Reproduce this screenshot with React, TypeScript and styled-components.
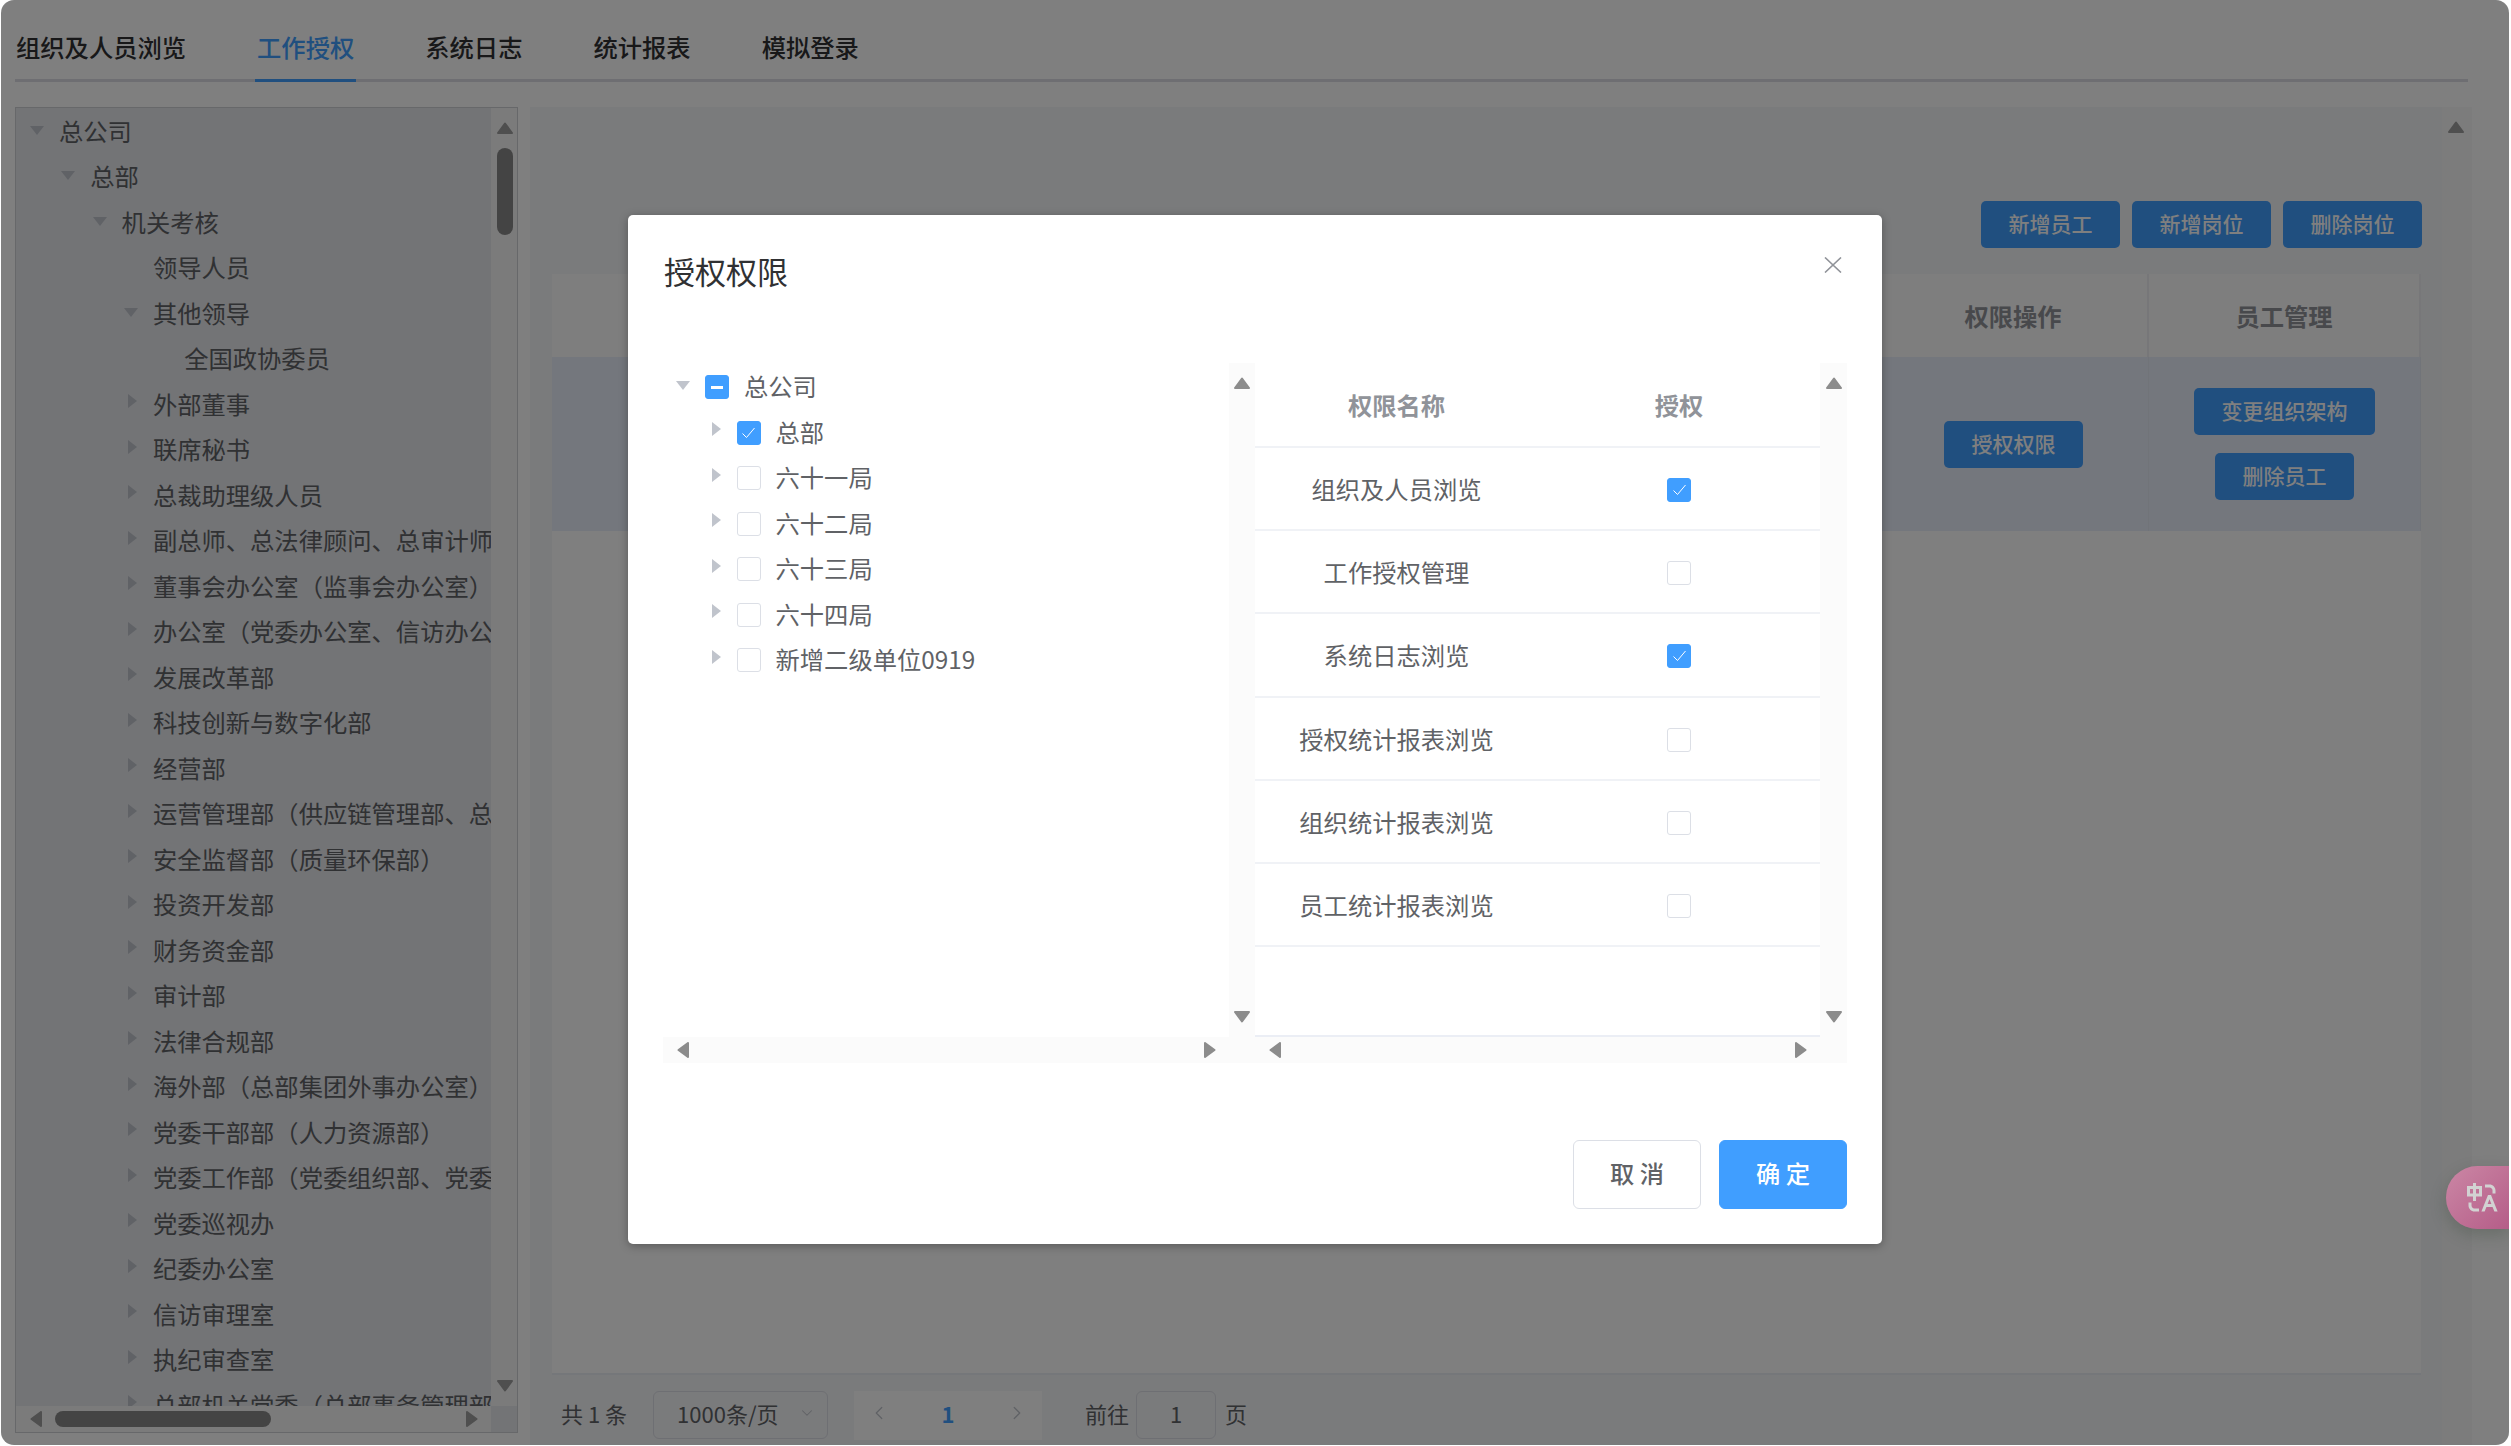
import React from "react";
import styled, { createGlobalStyle } from "styled-components";
import { ChevronDown, ChevronLeft, ChevronRight } from "lucide-react";
import { RiTranslate } from "react-icons/ri";

const Global = createGlobalStyle`
  html, body { margin: 0; padding: 0; background: #fff; overflow: hidden; }
  * { box-sizing: border-box; }
  body { font-family: "Noto Sans CJK SC", "Noto Sans", sans-serif; }
`;

const Shell = styled.div`
  position: relative;
  width: 2508px;
  height: 1445px;
  margin-left: 1px;
  background: #fff;
  border-radius: 13px;
  overflow: hidden;
`;

const TabBar = styled.div`
  display: flex;
  gap: 67px;
  height: 82px;
  margin: 0 41px 0 14px;
  padding-top: 18px;
  border-bottom: 3px solid #dcdde4;
`;

const Tab = styled.div<{ $active?: boolean }>`
  height: 64px;
  padding: 0 2px;
  line-height: 58px;
  font-size: 24.3px;
  font-weight: 500;
  white-space: nowrap;
  color: ${(p) => (p.$active ? "#409eff" : "#303133")};
  border-bottom: 3px solid ${(p) => (p.$active ? "#409eff" : "transparent")};
  &:first-child { margin-left: -1px; }
`;

const Main = styled.div`
  display: flex;
  align-items: flex-start;
  gap: 12px;
  margin: 25px 0 0 14px;
`;

const LeftPanel = styled.div`
  display: grid;
  grid-template-columns: 1fr 26px;
  grid-template-rows: 1fr 26px;
  width: 503px;
  height: 1326px;
  background: #e6e8ec;
  border: 1px solid #cfd0d4;
`;

const TreeViewport = styled.div`
  overflow: hidden;
  min-width: 0;
  padding-top: 0;
`;

const PageTreeRow = styled.div<{ $level: number }>`
  display: flex;
  align-items: center;
  height: 45.5px;
  padding-left: ${(p) => 13 + p.$level * 31.3}px;
  padding-bottom: 1px;
  font-size: 24.3px;
  color: #606266;
  white-space: nowrap;
`;

const CaretSlot = styled.span`
  display: flex;
  flex: none;
  align-items: center;
  justify-content: center;
  width: 16px;
  height: 16px;
  margin-right: 14px;
`;

const CaretSvg = styled.svg`
  display: block;
  fill: #c0c4cc;
`;

const ClosedCaret = styled(CaretSvg)`
  margin: 0 0 4px 4px;
`;

const ScrollV = styled.div<{ $track: string }>`
  display: flex;
  flex-direction: column;
  align-items: center;
  padding: 14px 0;
  background: ${(p) => p.$track};
`;

const TreeStrip = styled(ScrollV)`
  padding-left: 2px;
`;

const PanelStrip = styled(ScrollV)`
  flex: none;
  width: 30px;
  padding-right: 3px;
`;

const ScrollH = styled.div<{ $track: string }>`
  display: flex;
  align-items: center;
  padding: 0 13px 0 14px;
  background: ${(p) => p.$track};
`;

const ThumbV = styled.div`
  width: 16px;
  height: 87px;
  margin-top: 14px;
  border-radius: 8px;
  background: #888;
`;

const ThumbH = styled.div`
  width: 216px;
  height: 16px;
  margin-left: 13px;
  border-radius: 8px;
  background: #888;
`;

const Push = styled.div`
  flex: 1;
`;

const ArrowSvg = styled.svg<{ $tone: string }>`
  display: block;
  flex: none;
  fill: ${(p) => p.$tone};
  stroke: ${(p) => p.$tone};
  stroke-width: 2;
  stroke-linejoin: round;
`;

const RightPanel = styled.div`
  display: flex;
  width: 1942px;
  height: 1338px;
  background: #f5f6f8;
`;

const Content = styled.div`
  display: flex;
  flex: 1;
  flex-direction: column;
  min-width: 0;
  padding: 94px 20px 0 22px;
`;

const Toolbar = styled.div`
  display: flex;
  align-items: center;
  gap: 12px;
  height: 47px;
  margin-bottom: 26px;
`;

const PageTitle = styled.div`
  margin: 0 auto 0 645px;
  padding-top: 6px;
  font-size: 30px;
  font-weight: 700;
  color: #000;
  white-space: nowrap;
`;

const PrimaryButton = styled.button<{ $w?: number }>`
  flex: none;
  width: ${(p) => p.$w ?? 139}px;
  height: 47px;
  padding: 0 0 3px;
  border: 0;
  border-radius: 5px;
  background: #409eff;
  color: #fff;
  font: 500 21px "Noto Sans CJK SC", sans-serif;
`;

const DataTable = styled.div`
  display: grid;
  grid-template-columns: 1327px 270px 272px;
  grid-template-rows: 83px 174px 1fr;
  width: 1869px;
  height: 1101px;
  background: #fff;
  border-bottom: 2px solid #ebeef5;
`;

const HeadCell = styled.div`
  display: flex;
  align-items: center;
  justify-content: center;
  background: #fdfdfd;
  border-right: 2px solid #eeeff3;
  font-size: 24.3px;
  font-weight: 700;
  color: #909399;
`;

const BodyCell = styled.div`
  display: flex;
  flex-direction: column;
  align-items: center;
  justify-content: center;
  gap: 18px;
  background: #e9eefb;
  border-right: 1px solid #e3e8f3;
`;

const Pagination = styled.div`
  display: flex;
  align-items: center;
  height: 48px;
  margin-top: 16px;
  padding-left: 9px;
  font-size: 22px;
  color: #606266;
  white-space: nowrap;
`;

const PageSelect = styled.div`
  display: flex;
  align-items: center;
  justify-content: space-between;
  width: 175px;
  height: 48px;
  margin-left: 26px;
  padding: 0 11px 4px 23px;
  border: 1px solid #dcdfe6;
  border-radius: 6px;
  svg { color: #c0c4cc; }
`;

const Pager = styled.div`
  display: flex;
  align-items: center;
  justify-content: space-between;
  width: 188px;
  height: 49px;
  margin-left: 26px;
  padding: 0 14px 4px;
  background: #fff;
  svg { color: #c0c4cc; }
`;

const PagerNumber = styled.span`
  font-weight: 700;
  color: #409eff;
`;

const JumpLabel = styled.span<{ $gap: number }>`
  margin-left: ${(p) => p.$gap}px;
  padding-bottom: 4px;
`;

const JumpInput = styled.div`
  display: flex;
  align-items: center;
  justify-content: center;
  width: 80px;
  height: 48px;
  margin-left: 7px;
  padding-bottom: 4px;
  border: 1px solid #dcdfe6;
  border-radius: 6px;
`;

const Overlay = styled.div`
  position: absolute;
  inset: 0;
  background: rgba(0, 0, 0, 0.5);
`;

const Dialog = styled.div`
  position: absolute;
  left: 627px;
  top: 215px;
  display: flex;
  flex-direction: column;
  width: 1254px;
  height: 1029px;
  border-radius: 5px;
  background: #fff;
  box-shadow: 0 2px 10px rgba(0, 0, 0, 0.3);
`;

const DialogHeader = styled.div`
  position: relative;
  height: 148px;
  padding: 35px 36px 0;
  font-size: 31px;
  line-height: 42px;
  color: #303133;
`;

const CloseIcon = styled.svg`
  position: absolute;
  top: 42px;
  right: 40px;
  fill: none;
  stroke: #909399;
  stroke-width: 1.6;
`;

const Transfer = styled.div`
  display: grid;
  grid-template-columns: 566px 26px 565px 27px;
  grid-template-rows: 674px 26px;
  width: 1184px;
  margin-left: 35px;
`;

const AuthTree = styled.div`
  padding-top: 0;
`;

const AuthRow = styled.div<{ $level: number }>`
  display: flex;
  align-items: center;
  height: 45.5px;
  padding-left: ${(p) => 12 + p.$level * 31.5}px;
  font-size: 24.3px;
  color: #606266;
`;

const CheckBox = styled.span<{ $state: "on" | "off" | "half" }>`
  position: relative;
  display: flex;
  flex: none;
  align-items: center;
  justify-content: center;
  width: 24px;
  height: 24px;
  margin-top: 3px;
  border-radius: 3px;
  border: 1px solid ${(p) => (p.$state === "off" ? "#dcdfe6" : "#409eff")};
  background: ${(p) => (p.$state === "off" ? "#fff" : "#409eff")};
  svg { fill: none; stroke: #fff; stroke-width: 1; }
`;

const HalfDash = styled.span`
  width: 12px;
  height: 3px;
  background: #fff;
`;

const AuthLabel = styled.span`
  margin-left: 15px;
  white-space: nowrap;
`;

const PermTable = styled.div`
  display: grid;
  grid-template-columns: 283px 282px;
  grid-template-rows: 85px;
  grid-auto-rows: 83.2px;
  align-content: start;
  border-bottom: 2px solid #ebeef5;
`;

const PermHead = styled.div`
  display: flex;
  align-items: center;
  justify-content: center;
  border-bottom: 2px solid #f0f2f6;
  font-size: 24.3px;
  font-weight: 700;
  color: #909399;
`;

const PermCell = styled.div`
  display: flex;
  align-items: center;
  justify-content: center;
  border-bottom: 2px solid #f0f2f6;
  font-size: 24.3px;
  color: #606266;
`;

const DialogFooter = styled.div`
  display: flex;
  justify-content: flex-end;
  gap: 18px;
  margin-top: 77px;
  padding-right: 35px;
`;

const FooterButton = styled.button<{ $primary?: boolean }>`
  width: 128px;
  height: 69px;
  padding: 0 0 4px;
  border-radius: 6px;
  border: 1px solid ${(p) => (p.$primary ? "#409eff" : "#dcdfe6")};
  background: ${(p) => (p.$primary ? "#409eff" : "#fff")};
  color: ${(p) => (p.$primary ? "#fff" : "#606266")};
  font: 500 24.3px "Noto Sans CJK SC", sans-serif;
`;

const TranslateFab = styled.div`
  position: absolute;
  right: 0;
  top: 1166px;
  display: flex;
  align-items: center;
  width: 63px;
  height: 63px;
  padding-left: 18px;
  border-radius: 32px 0 0 32px;
  background: linear-gradient(135deg, #cb87a5, #b55d88);
  box-shadow: 0 6px 16px rgba(40, 60, 40, 0.25);
  color: #d2d2d2;
`;

type Dir = "up" | "down" | "left" | "right";
const arrowPaths: Record<Dir, { w: number; h: number; d: string }> = {
  up: { w: 16, h: 12, d: "M8 1.5 L15 11 L1 11 Z" },
  down: { w: 16, h: 12, d: "M1 1 L15 1 L8 10.5 Z" },
  left: { w: 12, h: 16, d: "M1.5 8 L11 1 L11 15 Z" },
  right: { w: 12, h: 16, d: "M1 1 L10.5 8 L1 15 Z" },
};

const Arrow = ({ dir, tone }: { dir: Dir; tone: string }) => {
  const a = arrowPaths[dir];
  return (
    <ArrowSvg $tone={tone} width={a.w} height={a.h} viewBox={`0 0 ${a.w} ${a.h}`}>
      <path d={a.d} />
    </ArrowSvg>
  );
};

const Caret = ({ open }: { open: boolean }) =>
  open ? (
    <CaretSvg width="14" height="9" viewBox="0 0 14 9">
      <path d="M0 0H14L7 9Z" />
    </CaretSvg>
  ) : (
    <ClosedCaret width="9" height="14" viewBox="0 0 9 14">
      <path d="M0 0L9 7L0 14Z" />
    </ClosedCaret>
  );

const Check = () => (
  <svg width="15" height="12" viewBox="0 0 15 12">
    <path d="M1.5 6.5L5.5 10.5L13.5 1" />
  </svg>
);

const Box = ({ state }: { state: "on" | "off" | "half" }) => (
  <CheckBox $state={state}>
    {state === "on" && <Check />}
    {state === "half" && <HalfDash />}
  </CheckBox>
);

type PageNode = [string, number, boolean | null];
const pageTree: PageNode[] = [
  ["总公司", 0, true],
  ["总部", 1, true],
  ["机关考核", 2, true],
  ["领导人员", 3, null],
  ["其他领导", 3, true],
  ["全国政协委员", 4, null],
  ["外部董事", 3, false],
  ["联席秘书", 3, false],
  ["总裁助理级人员", 3, false],
  ["副总师、总法律顾问、总审计师", 3, false],
  ["董事会办公室（监事会办公室）", 3, false],
  ["办公室（党委办公室、信访办公室）", 3, false],
  ["发展改革部", 3, false],
  ["科技创新与数字化部", 3, false],
  ["经营部", 3, false],
  ["运营管理部（供应链管理部、总部采购）", 3, false],
  ["安全监督部（质量环保部）", 3, false],
  ["投资开发部", 3, false],
  ["财务资金部", 3, false],
  ["审计部", 3, false],
  ["法律合规部", 3, false],
  ["海外部（总部集团外事办公室）", 3, false],
  ["党委干部部（人力资源部）", 3, false],
  ["党委工作部（党委组织部、党委宣传部）", 3, false],
  ["党委巡视办", 3, false],
  ["纪委办公室", 3, false],
  ["信访审理室", 3, false],
  ["执纪审查室", 3, false],
  ["总部机关党委（总部事务管理部）", 3, false],
];

type AuthNode = [string, number, boolean, "on" | "off" | "half"];
const authTree: AuthNode[] = [
  ["总公司", 0, true, "half"],
  ["总部", 1, false, "on"],
  ["六十一局", 1, false, "off"],
  ["六十二局", 1, false, "off"],
  ["六十三局", 1, false, "off"],
  ["六十四局", 1, false, "off"],
  ["新增二级单位0919", 1, false, "off"],
];

const perms: [string, "on" | "off"][] = [
  ["组织及人员浏览", "on"],
  ["工作授权管理", "off"],
  ["系统日志浏览", "on"],
  ["授权统计报表浏览", "off"],
  ["组织统计报表浏览", "off"],
  ["员工统计报表浏览", "off"],
];

const pageArrow = "#9e9e9e";
const modalArrow = "#8c8c8c";

export default function App() {
  return (
    <>
      <Global />
      <Shell>
        <TabBar>
          <Tab>组织及人员浏览</Tab>
          <Tab $active>工作授权</Tab>
          <Tab>系统日志</Tab>
          <Tab>统计报表</Tab>
          <Tab>模拟登录</Tab>
        </TabBar>
        <Main>
          <LeftPanel>
            <TreeViewport>
              {pageTree.map(([label, level, open]) => (
                <PageTreeRow key={label} $level={level}>
                  <CaretSlot>{open !== null && <Caret open={open} />}</CaretSlot>
                  {label}
                </PageTreeRow>
              ))}
            </TreeViewport>
            <TreeStrip $track="#f6f6f6">
              <Arrow dir="up" tone={pageArrow} />
              <ThumbV />
              <Push />
              <Arrow dir="down" tone={pageArrow} />
            </TreeStrip>
            <ScrollH $track="#f6f6f6">
              <Arrow dir="left" tone={pageArrow} />
              <ThumbH />
              <Push />
              <Arrow dir="right" tone={pageArrow} />
            </ScrollH>
          </LeftPanel>
          <RightPanel>
            <Content>
              <Toolbar>
                <PageTitle>总部工作授权</PageTitle>
                <PrimaryButton>新增员工</PrimaryButton>
                <PrimaryButton>新增岗位</PrimaryButton>
                <PrimaryButton>删除岗位</PrimaryButton>
              </Toolbar>
              <DataTable>
                <HeadCell>岗位</HeadCell>
                <HeadCell>权限操作</HeadCell>
                <HeadCell>员工管理</HeadCell>
                <BodyCell />
                <BodyCell>
                  <PrimaryButton>授权权限</PrimaryButton>
                </BodyCell>
                <BodyCell>
                  <PrimaryButton $w={181}>变更组织架构</PrimaryButton>
                  <PrimaryButton>删除员工</PrimaryButton>
                </BodyCell>
              </DataTable>
              <Pagination>
                <JumpLabel $gap={0}>共 1 条</JumpLabel>
                <PageSelect>
                  1000条/页
                  <ChevronDown size={18} strokeWidth={1.4} />
                </PageSelect>
                <Pager>
                  <ChevronLeft size={22} strokeWidth={1.4} />
                  <PagerNumber>1</PagerNumber>
                  <ChevronRight size={22} strokeWidth={1.4} />
                </Pager>
                <JumpLabel $gap={43}>前往</JumpLabel>
                <JumpInput>1</JumpInput>
                <JumpLabel $gap={9}>页</JumpLabel>
              </Pagination>
            </Content>
            <PanelStrip $track="#f8f8f8">
              <Arrow dir="up" tone={pageArrow} />
            </PanelStrip>
          </RightPanel>
        </Main>
        <Overlay>
          <Dialog>
            <DialogHeader>
              授权权限
              <CloseIcon width="18" height="16" viewBox="0 0 18 16">
                <path d="M1 0.5L17 15.5M17 0.5L1 15.5" />
              </CloseIcon>
            </DialogHeader>
            <Transfer>
              <AuthTree>
                {authTree.map(([label, level, open, state]) => (
                  <AuthRow key={label} $level={level}>
                    <CaretSlot>
                      <Caret open={open} />
                    </CaretSlot>
                    <Box state={state} />
                    <AuthLabel>{label}</AuthLabel>
                  </AuthRow>
                ))}
              </AuthTree>
              <ScrollV $track="#fbfbfb">
                <Arrow dir="up" tone={modalArrow} />
                <Push />
                <Arrow dir="down" tone={modalArrow} />
              </ScrollV>
              <PermTable>
                <PermHead>权限名称</PermHead>
                <PermHead>授权</PermHead>
                {perms.map(([label, state]) => (
                  <React.Fragment key={label}>
                    <PermCell>{label}</PermCell>
                    <PermCell>
                      <Box state={state} />
                    </PermCell>
                  </React.Fragment>
                ))}
              </PermTable>
              <ScrollV $track="#fbfbfb">
                <Arrow dir="up" tone={modalArrow} />
                <Push />
                <Arrow dir="down" tone={modalArrow} />
              </ScrollV>
              <ScrollH $track="#fbfbfb">
                <Arrow dir="left" tone={modalArrow} />
                <Push />
                <Arrow dir="right" tone={modalArrow} />
              </ScrollH>
              <ScrollH $track="#fbfbfb" />
              <ScrollH $track="#fbfbfb">
                <Arrow dir="left" tone={modalArrow} />
                <Push />
                <Arrow dir="right" tone={modalArrow} />
              </ScrollH>
              <ScrollH $track="#fbfbfb" />
            </Transfer>
            <DialogFooter>
              <FooterButton>取 消</FooterButton>
              <FooterButton $primary>确 定</FooterButton>
            </DialogFooter>
          </Dialog>
        </Overlay>
        <TranslateFab>
          <RiTranslate size={36} />
        </TranslateFab>
      </Shell>
    </>
  );
}
